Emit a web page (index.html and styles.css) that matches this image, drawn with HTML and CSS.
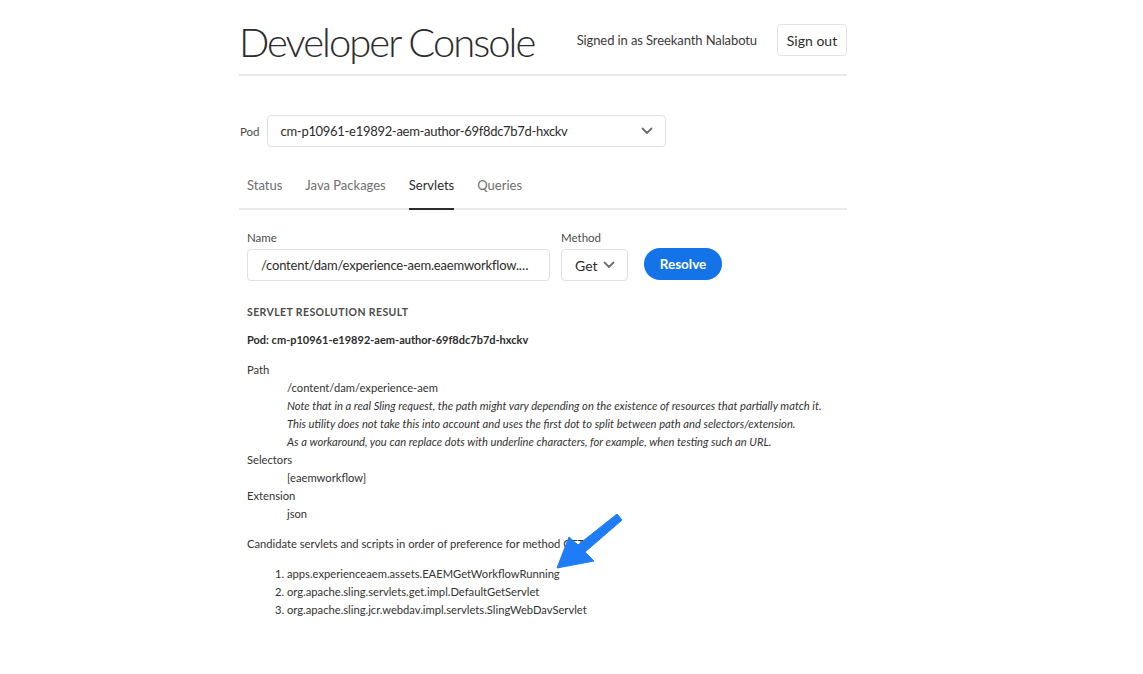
FILE: index.html
```html
<!DOCTYPE html>
<html>
<head>
<meta charset="utf-8">
<title>Developer Console</title>
<link rel="stylesheet" href="styles.css">
</head>
<body>
<div class="page">
  <header class="header">
    <h1 class="title">Developer Console</h1>
    <div class="user">
      <span class="signed">Signed in as Sreekanth Nalabotu</span>
      <button class="btn-quiet">Sign out</button>
    </div>
  </header>

  <div class="pod-row">
    <label class="pod-label">Pod</label>
    <div class="select pod-select">
      <span>cm-p10961-e19892-aem-author-69f8dc7b7d-hxckv</span>
      <svg class="chev" width="12" height="8" viewBox="0 0 12 8"><path d="M1.5 1.5 L6 6 L10.5 1.5" fill="none" stroke="#6e6e6e" stroke-width="1.8" stroke-linecap="round" stroke-linejoin="round"/></svg>
    </div>
  </div>

  <nav class="tabs">
    <span class="tab">Status</span>
    <span class="tab">Java Packages</span>
    <span class="tab active">Servlets</span>
    <span class="tab">Queries</span>
  </nav>

  <div class="form">
    <div class="field">
      <label class="field-label">Name</label>
      <div class="input name-input">/content/dam/experience-aem.eaemworkflow.…</div>
    </div>
    <div class="field">
      <label class="field-label">Method</label>
      <div class="select method-select">
        <span>Get</span>
        <svg class="chev" width="12" height="8" viewBox="0 0 12 8"><path d="M1.5 1.5 L6 6 L10.5 1.5" fill="none" stroke="#6e6e6e" stroke-width="1.8" stroke-linecap="round" stroke-linejoin="round"/></svg>
      </div>
    </div>
    <button class="btn-cta">Resolve</button>
  </div>

  <section class="result">
    <h2 class="result-head">SERVLET RESOLUTION RESULT</h2>
    <p class="result-pod">Pod: cm-p10961-e19892-aem-author-69f8dc7b7d-hxckv</p>
    <dl class="info">
      <dt>Path</dt>
      <dd>/content/dam/experience-aem</dd>
      <dd class="note">Note that in a real Sling request, the path might vary depending on the existence of resources that partially match it.</dd>
      <dd class="note">This utility does not take this into account and uses the first dot to split between path and selectors/extension.</dd>
      <dd class="note">As a workaround, you can replace dots with underline characters, for example, when testing such an URL.</dd>
      <dt>Selectors</dt>
      <dd>[eaemworkflow]</dd>
      <dt>Extension</dt>
      <dd>json</dd>
    </dl>
    <p class="candidates">Candidate servlets and scripts in order of preference for method GET:</p>
    <ol class="list">
      <li>apps.experienceaem.assets.EAEMGetWorkflowRunning</li>
      <li>org.apache.sling.servlets.get.impl.DefaultGetServlet</li>
      <li>org.apache.sling.jcr.webdav.impl.servlets.SlingWebDavServlet</li>
    </ol>
  </section>
</div>
<svg class="arrow" width="80" height="70" viewBox="550 505 80 70">
  <polygon points="557,568 569,537 578,545 617,514 622,520 585,552 594,561" fill="#1f7cf7" stroke="#1f7cf7" stroke-width="1" stroke-linejoin="round"/>
</svg>
</body>
</html>
```
FILE: styles.css
```css
* { box-sizing: border-box; }
html, body { margin: 0; padding: 0; background: #fff; }
body {
  font-family: Lato, "Open Sans", sans-serif;
  color: #2c2c2c;
  position: relative;
  min-height: 674px;
}
.page {
  width: 608px;
  margin-left: 239px;
}
.header {
  display: flex;
  align-items: center;
  justify-content: space-between;
  padding-top: 19px;
  padding-bottom: 9px;
  border-bottom: 2px solid #eaeaea;
}
.title {
  margin: 0;
  font-weight: 300;
  font-size: 40px;
  line-height: 46px;
  color: #2c2c2c;
  letter-spacing: -2px;
  white-space: nowrap;
}
.user {
  display: flex;
  align-items: center;
  gap: 20px;
  margin-top: -4px;
  white-space: nowrap;
}
.signed { font-size: 13px; color: #3a3a3a; letter-spacing: -0.1px; }
.btn-quiet {
  font-family: inherit;
  font-size: 14px;
  color: #2c2c2c;
  background: #fff;
  border: 1px solid #e1e1e1;
  border-radius: 4px;
  height: 32px;
  width: 70px;
  padding: 0;
  white-space: nowrap;
}
.pod-row {
  display: flex;
  align-items: center;
  margin-top: 39px;
  gap: 7px;
}
.pod-label { font-size: 11.5px; color: #4b4b4b; padding-left: 1px; }
.select {
  display: flex;
  align-items: center;
  justify-content: space-between;
  border: 1px solid #e1e1e1;
  border-radius: 4px;
  height: 32px;
  font-size: 13px;
  letter-spacing: -0.3px;
  color: #2c2c2c;
}
.pod-select { width: 399px; padding: 0 12px 0 13px; }
.tabs {
  display: flex;
  margin-top: 23px;
  border-bottom: 2px solid #eaeaea;
  padding-left: 8px;
  height: 40px;
}
.tab {
  font-size: 13px;
  color: #6e6e6e;
  margin-right: 23px;
  padding-top: 7px;
  height: 40px;
}
.tab.active {
  color: #2c2c2c;
  border-bottom: 2px solid #2c2c2c;
}
.form {
  display: flex;
  align-items: flex-end;
  padding-left: 8px;
  margin-top: 21px;
  gap: 11px;
}
.field { display: flex; flex-direction: column; gap: 5px; }
.field-label { font-size: 11.5px; color: #4b4b4b; }
.input {
  height: 32px;
  border: 1px solid #e1e1e1;
  border-radius: 4px;
  font-size: 13px;
  letter-spacing: -0.2px;
  display: flex;
  align-items: center;
  padding: 0 12px 0 13px;
  white-space: nowrap;
  overflow: hidden;
}
.name-input { width: 303px; }
.method-select { width: 67px; padding: 0 12px 0 13px; letter-spacing: 0; font-size: 14px; }
.btn-cta {
  margin-left: 5px;
  margin-bottom: 1px;
  height: 32px;
  width: 78px;
  border: none;
  border-radius: 16px;
  background: #1473e6;
  color: #fff;
  font-family: inherit;
  font-size: 13.5px;
  font-weight: 700;
}
.result {
  padding-left: 8px;
  margin-top: 23px;
  font-size: 11.2px;
  color: #333;
}
.result-head {
  margin: 0;
  font-size: 10.5px;
  font-weight: 700;
  letter-spacing: 0.4px;
  color: #4b4b4b;
  line-height: 16px;
}
.result-pod {
  margin: 12px 0 0;
  font-size: 11px;
  font-weight: 700;
  color: #2c2c2c;
  line-height: 16px;
}
.info {
  margin: 13px 0 0;
  line-height: 18px;
}
.info dt { margin: 0; }
.info dd { margin: 0 0 0 40px; white-space: nowrap; }
.info dd.note { font-style: italic; }
.candidates { margin: 12px 0 0; line-height: 18px; }
.list {
  margin: 12px 0 0;
  padding-left: 40px;
  line-height: 18px;
}
.arrow {
  position: absolute;
  left: 550px;
  top: 505px;
}
```
